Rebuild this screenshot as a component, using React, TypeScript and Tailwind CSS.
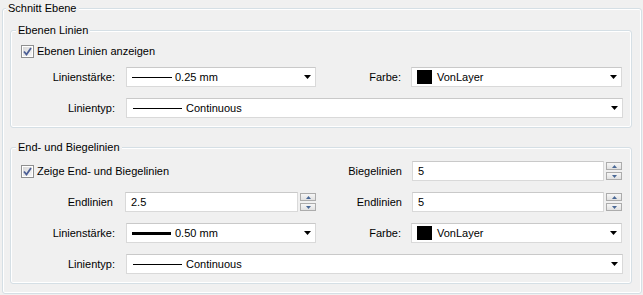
import type { ReactNode } from "react"

const DropArrow = () => (
  <svg width="7" height="4" viewBox="0 0 7 4" className="ml-auto mr-[4px] shrink-0">
    <path d="M0 0h7L3.5 4z" fill="#000" />
  </svg>
)

const Combo = ({ children, className }: { children: ReactNode; className: string }) => (
  <div className={`h-[20px] bg-white border border-[#d9d9d9] border-t-[#c9c9c9] flex items-center ${className}`}>
    {children}
    <DropArrow />
  </div>
)

const Spinner = () => (
  <div className="ml-[2px] w-[16px] h-[20px] flex flex-col justify-between py-[1px]">
    {[0, 1].map((i) => (
      <div
        key={i}
        className="h-[8px] border border-[#acacac] bg-gradient-to-b from-[#f6f6f6] to-[#e1e1e1] flex items-center justify-center"
      >
        <svg width="5" height="3" viewBox="0 0 5 3">
          <path d={i === 0 ? "M0 3h5L2.5 0z" : "M0 0h5L2.5 3z"} fill="#4a6896" />
        </svg>
      </div>
    ))}
  </div>
)

const SpinBox = ({ value, className }: { value: string; className: string }) => (
  <div className="flex items-center">
    <div className={`h-[20px] bg-white border border-[#d9d9d9] border-t-[#c9c9c9] flex items-center pl-[5px] ${className}`}>
      {value}
    </div>
    <Spinner />
  </div>
)

const CheckRow = ({ label }: { label: string }) => (
  <div className="flex items-center h-[20px] w-[305px] pl-[10px]">
    <div className="w-[13px] h-[13px] border border-[#8e8f8f] bg-white p-[1px]">
      <div className="w-full h-full bg-gradient-to-br from-[#d8d8d8] to-[#f7f7f7] flex items-center justify-center">
        <svg width="9" height="9" viewBox="0 0 9 9">
          <path d="M1 4.5 L3.5 7.5 L8 1" fill="none" stroke="#4c5f96" strokeWidth="1.8" />
        </svg>
      </div>
    </div>
    <span className="ml-[3px]">{label}</span>
  </div>
)

const Swatch = () => (
  <>
    <div className="ml-[5px] w-[15px] h-[14px] bg-black" />
    <span className="ml-[5px]">VonLayer</span>
  </>
)

const Label = ({ text, className }: { text: string; className: string }) => (
  <div className={`text-right shrink-0 ${className}`}>{text}</div>
)

const Group = ({ title, className, children }: { title: string; className: string; children: ReactNode }) => (
  <fieldset className={`border border-[#d5dfe5] rounded-[3px] shadow-[inset_0_0_0_1px_#ffffff] ${className}`}>
    <legend className="ml-[5px] px-[2px] leading-[14px] bg-[#f0f0f0]">{title}</legend>
    {children}
  </fieldset>
)

const ThinLine = ({ w }: { w: string }) => <div className={`h-px bg-black ${w}`} />

export default function App() {
  return (
    <div className="w-[643px] h-[295px] bg-[#f0f0f0] pt-[1px] text-[11px] text-black font-['Liberation_Sans',Arial,sans-serif] overflow-hidden">
      <fieldset className="ml-[2px] w-[640px] pb-[9px] border border-[#d5dfe5] rounded-[3px] shadow-[inset_0_0_0_1px_#ffffff]">
        <legend className="ml-[3px] px-[2px] leading-[14px] bg-[#f0f0f0]">Schnitt Ebene</legend>

        <Group title="Ebenen Linien" className="ml-[7px] mt-[8px] w-[622px] pb-[9px]">
          <div className="mt-[4px]">
            <CheckRow label="Ebenen Linien anzeigen" />
          </div>
          <div className="mt-[6px] flex items-center">
            <Label text="Linienstärke:" className="w-[104px]" />
            <Combo className="ml-[11px] w-[190px] pl-[5px]">
              <ThinLine w="w-[40px]" />
              <span className="ml-[3px]">0.25 mm</span>
            </Combo>
            <Label text="Farbe:" className="w-[85px]" />
            <Combo className="ml-[10px] w-[211px]">
              <Swatch />
            </Combo>
          </div>
          <div className="mt-[11px] flex items-center">
            <Label text="Linientyp:" className="w-[104px]" />
            <Combo className="ml-[11px] w-[497px] pl-[6px]">
              <ThinLine w="w-[49px]" />
              <span className="ml-[4px]">Continuous</span>
            </Combo>
          </div>
        </Group>

        <Group title="End- und Biegelinien" className="ml-[7px] mt-[12px] w-[622px] pb-[9px]">
          <div className="mt-[7px] flex items-center">
            <CheckRow label="Zeige End- und Biegelinien" />
            <Label text="Biegelinien" className="w-[86px]" />
            <div className="ml-[10px]">
              <SpinBox value="5" className="w-[192px]" />
            </div>
          </div>
          <div className="mt-[11px] flex items-center">
            <Label text="Endlinien" className="w-[102px]" />
            <div className="ml-[12px]">
              <SpinBox value="2.5" className="w-[173px]" />
            </div>
            <Label text="Endlinien" className="w-[86px]" />
            <div className="ml-[10px]">
              <SpinBox value="5" className="w-[192px]" />
            </div>
          </div>
          <div className="mt-[11px] flex items-center">
            <Label text="Linienstärke:" className="w-[104px]" />
            <Combo className="ml-[11px] w-[190px] pl-[5px]">
              <div className="h-[3px] w-[39px] bg-black" />
              <span className="ml-[4px]">0.50 mm</span>
            </Combo>
            <Label text="Farbe:" className="w-[85px]" />
            <Combo className="ml-[10px] w-[211px]">
              <Swatch />
            </Combo>
          </div>
          <div className="mt-[11px] flex items-center">
            <Label text="Linientyp:" className="w-[104px]" />
            <Combo className="ml-[11px] w-[497px] pl-[6px]">
              <ThinLine w="w-[49px]" />
              <span className="ml-[4px]">Continuous</span>
            </Combo>
          </div>
        </Group>
      </fieldset>
    </div>
  )
}
